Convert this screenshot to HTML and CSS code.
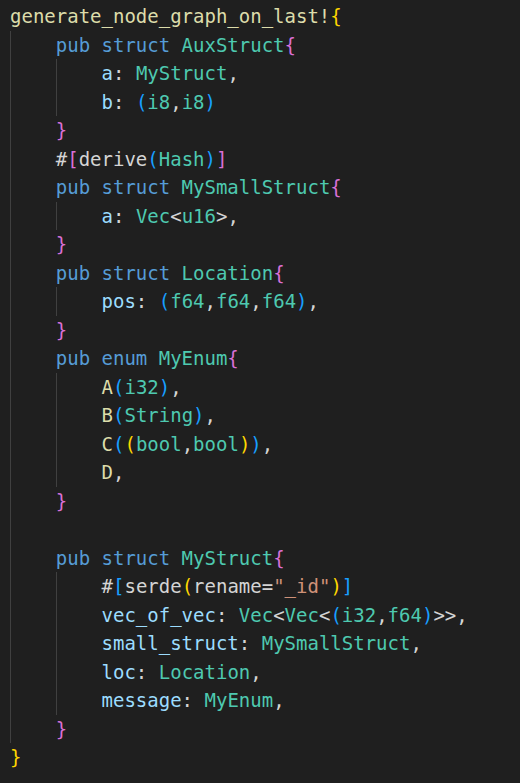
FILE: index.html
```html
<!DOCTYPE html>
<html>
<head>
<meta charset="utf-8">
<link rel="stylesheet" href="styles.css">
</head>
<body>
<div class="editor">
<div class="line"><span class="fn">generate_node_graph_on_last!</span><span class="b1">{</span></div>
<div class="line"><span class="ig"></span><span class="kw">pub struct </span><span class="ty">AuxStruct</span><span class="b2">{</span></div>
<div class="line"><span class="ig"></span><span class="ig"></span><span class="var">a</span><span class="p">: </span><span class="ty">MyStruct</span><span class="p">,</span></div>
<div class="line"><span class="ig"></span><span class="ig"></span><span class="var">b</span><span class="p">: </span><span class="b3">(</span><span class="ty">i8</span><span class="p">,</span><span class="ty">i8</span><span class="b3">)</span></div>
<div class="line"><span class="ig"></span><span class="b2">}</span></div>
<div class="line"><span class="ig"></span><span class="p">#</span><span class="b2">[</span><span class="p">derive</span><span class="b3">(</span><span class="ty">Hash</span><span class="b3">)</span><span class="b2">]</span></div>
<div class="line"><span class="ig"></span><span class="kw">pub struct </span><span class="ty">MySmallStruct</span><span class="b2">{</span></div>
<div class="line"><span class="ig"></span><span class="ig"></span><span class="var">a</span><span class="p">: </span><span class="ty">Vec</span><span class="p">&lt;</span><span class="ty">u16</span><span class="p">&gt;,</span></div>
<div class="line"><span class="ig"></span><span class="b2">}</span></div>
<div class="line"><span class="ig"></span><span class="kw">pub struct </span><span class="ty">Location</span><span class="b2">{</span></div>
<div class="line"><span class="ig"></span><span class="ig"></span><span class="var">pos</span><span class="p">: </span><span class="b3">(</span><span class="ty">f64</span><span class="p">,</span><span class="ty">f64</span><span class="p">,</span><span class="ty">f64</span><span class="b3">)</span><span class="p">,</span></div>
<div class="line"><span class="ig"></span><span class="b2">}</span></div>
<div class="line"><span class="ig"></span><span class="kw">pub enum </span><span class="ty">MyEnum</span><span class="b2">{</span></div>
<div class="line"><span class="ig"></span><span class="ig"></span><span class="en">A</span><span class="b3">(</span><span class="ty">i32</span><span class="b3">)</span><span class="p">,</span></div>
<div class="line"><span class="ig"></span><span class="ig"></span><span class="en">B</span><span class="b3">(</span><span class="ty">String</span><span class="b3">)</span><span class="p">,</span></div>
<div class="line"><span class="ig"></span><span class="ig"></span><span class="en">C</span><span class="b3">(</span><span class="b1">(</span><span class="ty">bool</span><span class="p">,</span><span class="ty">bool</span><span class="b1">)</span><span class="b3">)</span><span class="p">,</span></div>
<div class="line"><span class="ig"></span><span class="ig"></span><span class="en">D</span><span class="p">,</span></div>
<div class="line"><span class="ig"></span><span class="b2">}</span></div>
<div class="line"><span class="ig"></span></div>
<div class="line"><span class="ig"></span><span class="kw">pub struct </span><span class="ty">MyStruct</span><span class="b2">{</span></div>
<div class="line"><span class="ig"></span><span class="ig"></span><span class="p">#</span><span class="b3">[</span><span class="p">serde</span><span class="b1">(</span><span class="p">rename=</span><span class="str">"_id"</span><span class="b1">)</span><span class="b3">]</span></div>
<div class="line"><span class="ig"></span><span class="ig"></span><span class="var">vec_of_vec</span><span class="p">: </span><span class="ty">Vec</span><span class="p">&lt;</span><span class="ty">Vec</span><span class="p">&lt;</span><span class="b3">(</span><span class="ty">i32</span><span class="p">,</span><span class="ty">f64</span><span class="b3">)</span><span class="p">&gt;&gt;,</span></div>
<div class="line"><span class="ig"></span><span class="ig"></span><span class="var">small_struct</span><span class="p">: </span><span class="ty">MySmallStruct</span><span class="p">,</span></div>
<div class="line"><span class="ig"></span><span class="ig"></span><span class="var">loc</span><span class="p">: </span><span class="ty">Location</span><span class="p">,</span></div>
<div class="line"><span class="ig"></span><span class="ig"></span><span class="var">message</span><span class="p">: </span><span class="ty">MyEnum</span><span class="p">,</span></div>
<div class="line"><span class="ig"></span><span class="b2">}</span></div>
<div class="line"><span class="b1">}</span></div>
</div>
</body>
</html>
```

FILE: styles.css
```css
html, body {
  margin: 0;
  padding: 0;
  background: #1f1f1f;
  height: 100%;
}
.editor {
  padding: 2px 0 0 10px;
  font-family: "DejaVu Sans Mono", "Liberation Mono", monospace;
  font-size: 19px;
  color: #d4d4d4;
  min-height: 781px;
}
.line {
  height: 28.5px;
  line-height: 28.5px;
  white-space: pre;
  display: flex;
  align-items: stretch;
}
.line > span { flex: none; }
.ig {
  display: inline-block;
  width: 45.77px;
  border-left: 1px solid #404040;
  box-sizing: border-box;
}
.fn { color: #dcdcaa; }
.kw { color: #569cd6; }
.ty { color: #4ec9b0; }
.var { color: #9cdcfe; }
.p { color: #d4d4d4; }
.str { color: #ce9178; }
.en { color: #dcdcaa; }
.b1 { color: #ffd700; }
.b2 { color: #da70d6; }
.b3 { color: #179fff; }
```
